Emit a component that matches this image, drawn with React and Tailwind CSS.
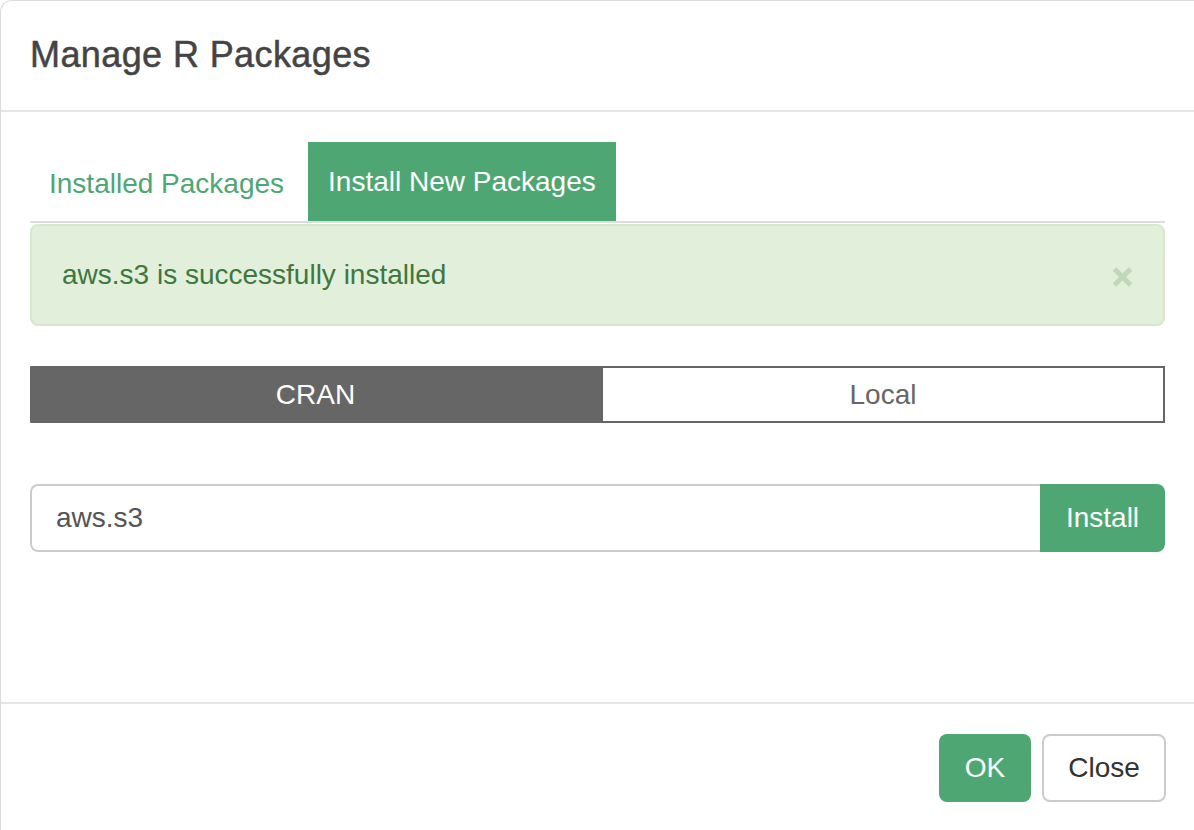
export default function App() {
  const font = { fontFamily: '"Liberation Sans", Arial, Helvetica, sans-serif' };
  return (
    <div
      className="w-[1194px] h-[830px] overflow-hidden bg-white border-l border-t border-[#dcdcdc] rounded-tl-[12px]"
      style={font}
    >
      {/* Header */}
      <div className="px-[29px] pt-[29px] pb-[30px] border-b-2 border-[#e5e5e5]">
        <h4 className="m-0 text-[36px] leading-[50px] text-[#444444] font-normal tracking-[0.4px] [-webkit-text-stroke:0.5px_#444444]">
          Manage R Packages
        </h4>
      </div>

      {/* Body */}
      <div className="h-[590px] px-[29px] pt-[30px]">
        {/* Tabs */}
        <div className="flex border-b-2 border-[#dddddd]">
          <div className="h-[79px] px-[19px] pt-[4px] mr-[5px] flex items-center text-[28px] text-[#4ea773]">
            Installed Packages
          </div>
          <div className="h-[79px] px-[20px] flex items-center text-[28px] text-white bg-[#4ea773]">
            Install New Packages
          </div>
        </div>

        {/* Alert */}
        <div className="mt-px mb-[40px] h-[102px] rounded-[8px] border-2 border-[#d6e8cd] bg-[#e2efdb] flex items-center justify-between pl-[30px] pr-[30px]">
          <span className="text-[28px] text-[#3e7740]">aws.s3 is successfully installed</span>
          <svg width="21" height="20" viewBox="0 0 21 20" className="mt-[3px]">
            <path d="M2.5 2 L18.5 18 M18.5 2 L2.5 18" stroke="#c1d7ba" strokeWidth="5" strokeLinecap="butt" />
          </svg>
        </div>

        {/* Toggle */}
        <div className="flex h-[57px]">
          <div className="w-[571px] flex items-center justify-center bg-[#666666] text-white text-[28px] rounded-l-[1px]">
            CRAN
          </div>
          <div className="flex-1 flex items-center justify-center bg-white border-2 border-[#666666] text-[#666666] text-[28px]">
            Local
          </div>
        </div>

        {/* Input group */}
        <div className="mt-[61px] flex h-[68px]">
          <div className="flex-1 flex items-center border-2 border-r-0 border-[#cccccc] rounded-l-[8px] px-[24px] text-[28px] text-[#555555] bg-white">
            aws.s3
          </div>
          <div className="w-[125px] flex items-center justify-center bg-[#4ea773] text-white text-[28px] rounded-r-[8px]">
            Install
          </div>
        </div>
      </div>

      {/* Footer */}
      <div className="border-t-2 border-[#e5e5e5] pt-[30px] pr-[28px] flex justify-end gap-[11px]">
        <div className="w-[92px] h-[68px] flex items-center justify-center rounded-[8px] bg-[#4ea773] text-white text-[28px]">
          OK
        </div>
        <div className="w-[124px] h-[68px] flex items-center justify-center rounded-[8px] bg-white border-2 border-[#cccccc] text-[#333333] text-[28px]">
          Close
        </div>
      </div>
    </div>
  );
}
